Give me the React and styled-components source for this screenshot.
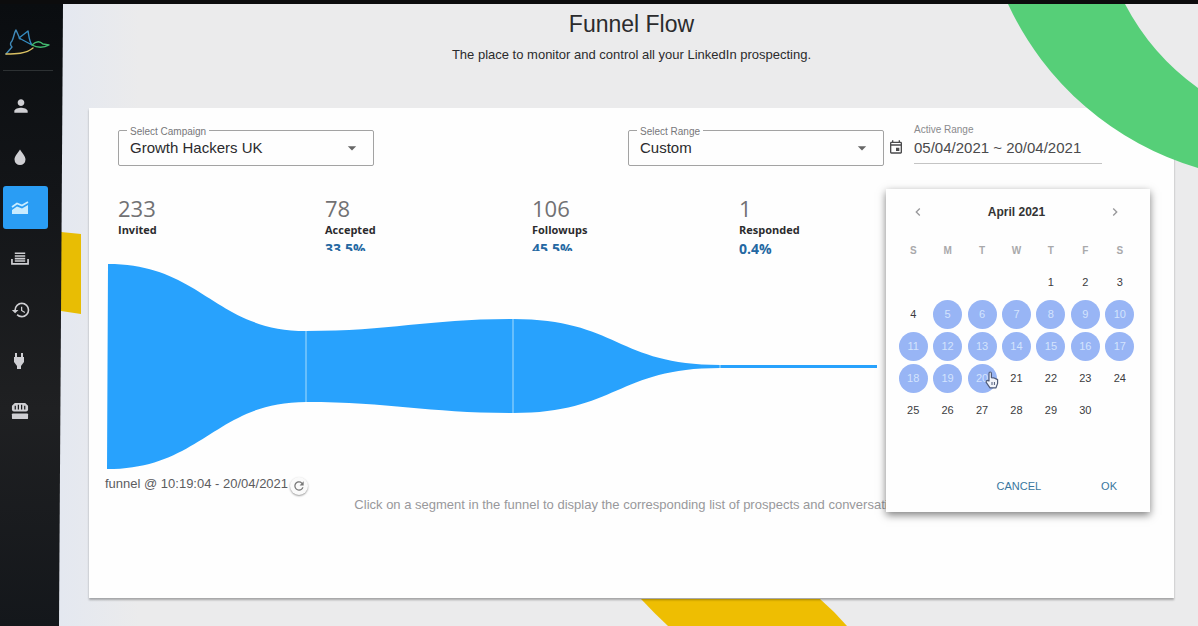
import React, { useState } from 'react';

import styled, { createGlobalStyle } from 'styled-components';
import {
  MdPerson,
  MdHistory,
  MdArrowDropDown,
  MdChevronLeft,
  MdChevronRight,
  MdRefresh,
  MdOutlineEvent,
} from 'react-icons/md';

const GlobalStyle = createGlobalStyle`
  * {
    box-sizing: border-box;
  }
  body {
    margin: 0;
    background: #ebebec;
    font-family: "Liberation Sans", Arial, sans-serif;
    color: #2b2b2d;
  }
  button, input, select {
    font-family: inherit;
    color: inherit;
  }
`

const Shell = styled.div`
  position: relative;
  display: flex;
  min-height: 100vh;
  overflow: hidden;
  border-top: 4px solid #0c0c0d;
  background: linear-gradient(90deg, #e4e8f0 60px, #ebebec 140px);
`

/* ---- sidebar ---- */

const Sidebar = styled.aside`
  position: relative;
  flex: none;
  width: 63px;
  padding: 24px 0 0 3px;
  background: linear-gradient(#0a0d10, #131518 30%, #1f2022 65%, #14171b);
  clip-path: polygon(0 0, 100% 0, calc(100% - 4px) 100%, 0 100%);
`

const LogoLink = styled.a`
  display: block;
  height: 43px;
  margin-right: 10px;
  border-bottom: 1px solid #2d3133;
`

const Nav = styled.nav`
  display: flex;
  flex-direction: column;
  gap: 8px;
  margin-top: 13px;
`

const NavButton = styled.button`
  display: flex;
  align-items: center;
  width: 45px;
  height: 43px;
  padding: 0 0 0 8px;
  border: 0;
  border-radius: 3px;
  background: ${(p) => (p.$active ? '#2a9df4' : 'transparent')};
  color: ${(p) => (p.$active ? '#c9ecff' : '#cfcfd3')};
`

/* ---- background shapes ---- */

const GreenRing = styled.svg`
  position: absolute;
  top: 0;
  right: 0;
  z-index: 2;
`

const YellowLeft = styled.svg`
  position: absolute;
  top: 228px;
  left: 61px;
`

const YellowBottom = styled.svg`
  position: absolute;
  bottom: 0;
  left: 641px;
`

/* ---- page ---- */

const Main = styled.main`
  flex: 1;
  min-width: 0;
  padding: 6px 24px 28px 26px;
`

const PageHeader = styled.header`
  padding-bottom: 43px;
  text-align: center;
`

const Title = styled.h1`
  margin: 0 0 7px;
  font-size: 23px;
  font-weight: 400;
  line-height: 28px;
`

const Subtitle = styled.p`
  margin: 0;
  font-size: 13px;
  line-height: 20px;
`

const Card = styled.section`
  position: relative;
  padding: 22px 72px 85px 29px;
  background: #fefefe;
  box-shadow: 0 2px 2px rgba(0, 0, 0, 0.3);
`

const Toolbar = styled.div`
  display: flex;
  justify-content: space-between;
`

const ToolbarGroup = styled.div`
  display: flex;
`

const SelectBox = styled.div`
  position: relative;
  width: 256px;
  height: 36px;
  & > label {
    position: absolute;
    top: -4px;
    left: 9px;
    padding: 0 3px;
    background: #fefefe;
    color: #77777a;
    font-size: 10px;
    line-height: 12px;
  }
  & > select {
    width: 100%;
    height: 100%;
    padding: 0 30px 2px 11px;
    appearance: none;
    border: 1px solid #a3a3a3;
    border-radius: 2px;
    background: transparent;
    font-size: 15px;
  }
  & > svg {
    position: absolute;
    top: 8px;
    right: 12px;
    color: #666;
    pointer-events: none;
  }
`

const DateField = styled.div`
  position: relative;
  display: flex;
  gap: 10px;
  padding-left: 4px;
  color: #4a4a4c;
  & > svg {
    flex: none;
    margin-top: 9px;
  }
`

const DateInput = styled.div`
  display: flex;
  flex-direction: column;
  width: 188px;
  height: 34px;
  & > label {
    margin-top: -6px;
    color: #8a8a8d;
    font-size: 10px;
    line-height: 12px;
  }
  & > input {
    flex: 1;
    width: 100%;
    padding: 0 0 4px;
    border: 0;
    border-bottom: 1px solid #c4c4c4;
    background: transparent;
    font-size: 15px;
  }
`

const Stats = styled.div`
  display: grid;
  grid-template-columns: repeat(4, 1fr);
  margin: 29px 156px 0 0;
  font-family: "Open Sans", "Noto Sans", sans-serif;
`

const StatValue = styled.div`
  color: #717173;
  font-size: 22px;
  line-height: 26px;
`

const StatLabel = styled.div`
  font-size: 11px;
  font-weight: 700;
  line-height: 18px;
`

const StatRate = styled.div`
  height: ${(p) => (p.$cut ? '12px' : '20px')};
  overflow: hidden;
  color: #2468a2;
  font-size: 14px;
  font-weight: 700;
  line-height: 20px;
`

const Chart = styled.svg`
  display: block;
  width: calc(100% - 214px);
  height: 205px;
  margin: 5px 0 0 -11px;
`

const StampRow = styled.div`
  display: flex;
  align-items: center;
  gap: 2px;
  height: 20px;
  margin: 4px 0 0 -13px;
  color: #5c5c5e;
  font-size: 13px;
`

const RefreshButton = styled.button`
  display: flex;
  align-items: center;
  justify-content: center;
  width: 18px;
  height: 18px;
  margin-top: 6px;
  padding: 0;
  border: 0;
  border-radius: 50%;
  background: #fafafa;
  box-shadow: 0 1px 2px rgba(0, 0, 0, 0.4);
  color: #777;
`

const Hint = styled.p`
  margin: 4px -72px 0 -29px;
  color: #98989b;
  font-size: 13px;
  line-height: 16px;
  text-align: center;
`

/* ---- calendar ---- */

const Popover = styled.div`
  position: absolute;
  top: 59px;
  left: 2px;
  z-index: 1;
  display: flex;
  flex-direction: column;
  width: 264px;
  height: 323px;
  padding: 10px 13px 15px 10px;
  background: #fefefe;
  box-shadow: 0 3px 8px rgba(0, 0, 0, 0.5);
`

const MonthBar = styled.div`
  display: flex;
  align-items: center;
  justify-content: space-between;
  height: 26px;
  padding: 0 14px;
  color: #333;
  font-size: 12px;
  font-weight: 700;
`

const ArrowButton = styled.button`
  display: flex;
  padding: 0;
  border: 0;
  background: none;
  color: #98989b;
`

const Days = styled.table`
  width: 100%;
  margin-top: 9px;
  border-collapse: collapse;
  table-layout: fixed;
  th, td {
    height: 32px;
    padding: 0;
    text-align: center;
  }
  th {
    color: #a9a9ab;
    font-size: 10px;
  }
`

const DayButton = styled.button`
  position: relative;
  width: 29px;
  height: 29px;
  padding: 0;
  border: 0;
  border-radius: 50%;
  background: ${(p) => (p.$selected ? '#98b5f5' : 'transparent')};
  color: ${(p) => (p.$selected ? '#d3e3fd' : '#3c3c3e')};
  font-size: 11px;
`

const Pointer = styled.svg`
  position: absolute;
  top: 7px;
  left: 17px;
`

const Actions = styled.div`
  display: flex;
  justify-content: flex-end;
  gap: 60px;
  margin-top: auto;
  padding-right: 20px;
`

const TextButton = styled.button`
  padding: 0;
  border: 0;
  background: none;
  color: #39769f;
  font-size: 11px;
  line-height: 22px;
`

function BirdLogo() {
  return (
    <svg width="48" height="30" viewBox="0 0 48 30" fill="none" strokeWidth="1.4" strokeLinejoin="round" strokeLinecap="round">
      <path d="M3 26 9 19C7 17 7 15 9 13 11 9 11 5 13 2L17 11" stroke="#3f89b8" />
      <path d="M16 10 25 3C26 8 26 13 29 17L16 10Z" stroke="#348bc0" />
      <path d="M29 17C33 13 37 13 40 16L46 17C41 20 34 20 29 17Z" stroke="#42b96e" />
      <path d="M3 26C12 26 23 26 30 20" stroke="#d9bf62" />
    </svg>
  )
}

function DropIcon() {
  return (
    <svg width="18" height="18" viewBox="0 0 18 18" fill="currentColor">
      <path d="M9 1.5C11 5 14.5 8 14.5 11.5A5.5 5.5 0 0 1 3.5 11.5C3.5 8 7 5 9 1.5Z" />
    </svg>
  )
}

function TrendIcon() {
  return (
    <svg width="18" height="18" viewBox="0 0 18 18" fill="none">
      <path d="M1 8 6 4.5 11 6.5 17 3" stroke="currentColor" strokeWidth="1.8" />
      <path d="M1 11 6 7.5 11 9.5 17 6V15H1Z" fill="currentColor" />
    </svg>
  )
}

function TrayIcon() {
  return (
    <svg width="18" height="18" viewBox="0 0 19 18" fill="none" stroke="currentColor">
      <path d="M1 9V14.2H18V9" strokeWidth="1.8" />
      <path d="M4 3H15M4 5.8H15M4 8.6H15M4 11.2H15" strokeWidth="1.6" />
    </svg>
  )
}

function PlugIcon() {
  return (
    <svg width="18" height="18" viewBox="0 0 18 18" fill="currentColor">
      <path d="M4 1H6V5H10V1H12V5H13V10L10 14V17H6V14L3 10V5H4Z" />
    </svg>
  )
}

function StoreIcon() {
  return (
    <svg width="18" height="19" viewBox="0 0 19 20" fill="currentColor">
      <path d="M4 1H15L18 4V8Q18 10 16 10H3Q1 10 1 8V4Z" />
      <path d="M4.5 4V8M7.8 3V8M11.2 3V8M14.5 4V8" stroke="#1c1d1f" strokeWidth="1.3" />
      <rect x="1" y="12" width="17" height="6" rx="1" />
    </svg>
  )
}

function HandPointer() {
  return (
    <Pointer width="14" height="18" viewBox="0 0 14 18" aria-hidden="true">
      <path
        d="M4 10V2.4Q4 1 5.2 1T6.4 2.4V6.6L8.4 6.8 10.6 7.6 12.6 8.6V12.4L11 16.8H5L1.2 11.4Q1 9.4 2.6 9.4Z"
        fill="#f2f4fa"
        stroke="#4f5b78"
        strokeWidth="1.2"
        strokeLinejoin="round"
      />
      <path d="M7 11V14M9.4 11V14" stroke="#4f5b78" />
    </Pointer>
  )
}

const navItems = [
  { name: 'Profile', icon: <MdPerson size={20} /> },
  { name: 'Leads', icon: <DropIcon /> },
  { name: 'Funnel', icon: <TrendIcon />, active: true },
  { name: 'Inbox', icon: <TrayIcon /> },
  { name: 'History', icon: <MdHistory size={20} /> },
  { name: 'Integrations', icon: <PlugIcon /> },
  { name: 'Store', icon: <StoreIcon /> },
];

const stats = [
  { value: 233, label: 'Invited' },
  { value: 78, label: 'Accepted', rate: '33.5%', cut: true },
  { value: 106, label: 'Followups', rate: '45.5%', cut: true },
  { value: 1, label: 'Responded', rate: '0.4%' },
];

const weekdays = ['S', 'M', 'T', 'W', 'T', 'F', 'S'];

// April 2021 starts on a Thursday
const weeks = [0, 1, 2, 3, 4].map((w) =>
  weekdays.map((_, d) => {
    const day = w * 7 + d - 3;
    return day > 0 && day <= 30 ? day : null;
  })
);

function OutlinedSelect({ id, label, options }) {
  return (
    <SelectBox>
      <select id={id}>
        {options.map((o) => <option key={o}>{o}</option>)}
      </select>
      <label htmlFor={id}>{label}</label>
      <MdArrowDropDown size={20} />
    </SelectBox>
  )
}

function Calendar() {
  const [range, setRange] = useState([5, 20]);

  const pick = (day) => {
    setRange(range[0] === range[1] && day > range[0] ? [range[0], day] : [day, day]);
  };

  return (
    <Popover>
      <MonthBar>
        <ArrowButton aria-label="Previous month"><MdChevronLeft size={16} /></ArrowButton>
        <span>April 2021</span>
        <ArrowButton aria-label="Next month"><MdChevronRight size={16} /></ArrowButton>
      </MonthBar>
      <Days>
        <thead>
          <tr>{weekdays.map((d, i) => <th key={i}>{d}</th>)}</tr>
        </thead>
        <tbody>
          {weeks.map((week, i) => (
            <tr key={i}>
              {week.map((day, j) => (
                <td key={j}>
                  {day && (
                    <DayButton $selected={day >= range[0] && day <= range[1]} onClick={() => pick(day)}>
                      {day}
                      {day === 20 && <HandPointer />}
                    </DayButton>
                  )}
                </td>
              ))}
            </tr>
          ))}
        </tbody>
      </Days>
      <Actions>
        <TextButton>CANCEL</TextButton>
        <TextButton>OK</TextButton>
      </Actions>
    </Popover>
  )
}

function FunnelChart() {
  return (
    <Chart viewBox="0 0 770 205" preserveAspectRatio="none" role="img" aria-label="Prospect funnel">
      <path
        fill="#28a2fd"
        d="M1 0C95 0 108 67 199 67 285 67 320 55 406 55 510 55 510 101 613 101H770V104H613C510 104 510 149 406 149 320 149 285 138 199 138 108 138 95 205 0 205Z"
      />
      <path d="M199 67V138M406 55V149M613 101V104" stroke="#7cc9fb" strokeWidth="1.5" />
    </Chart>
  )
}

export default function App() {
  return (
    <Shell>
      <GlobalStyle />
      <YellowLeft width="20" height="82">
        <path d="M0 0 20 2V82L0 79Z" fill="#e8bd04" />
      </YellowLeft>
      <YellowBottom width="206" height="27">
        <path d="M0 0H179Q193 12 206 27H27Q13 14 0 0Z" fill="#eebe02" />
      </YellowBottom>
      <Sidebar>
        <LogoLink href="/" aria-label="Home"><BirdLogo /></LogoLink>
        <Nav>
          {navItems.map((item) => (
            <NavButton key={item.name} aria-label={item.name} $active={item.active}>
              {item.icon}
            </NavButton>
          ))}
        </Nav>
      </Sidebar>
      <Main>
        <PageHeader>
          <Title>Funnel Flow</Title>
          <Subtitle>The place to monitor and control all your LinkedIn prospecting.</Subtitle>
        </PageHeader>
        <Card>
          <Toolbar>
            <OutlinedSelect id="campaign" label="Select Campaign" options={['Growth Hackers UK']} />
            <ToolbarGroup>
              <OutlinedSelect id="range" label="Select Range" options={['Custom']} />
              <DateField>
                <MdOutlineEvent size={16} />
                <DateInput>
                  <label htmlFor="dates">Active Range</label>
                  <input id="dates" defaultValue="05/04/2021 ~ 20/04/2021" />
                </DateInput>
                <Calendar />
              </DateField>
            </ToolbarGroup>
          </Toolbar>
          <Stats>
            {stats.map((s) => (
              <div key={s.label}>
                <StatValue>{s.value}</StatValue>
                <StatLabel>{s.label}</StatLabel>
                <StatRate $cut={s.cut}>{s.rate}</StatRate>
              </div>
            ))}
          </Stats>
          <FunnelChart />
          <StampRow>
            <span>funnel @ 10:19:04 - 20/04/2021</span>
            <RefreshButton aria-label="Refresh funnel"><MdRefresh size={14} /></RefreshButton>
          </StampRow>
          <Hint>Click on a segment in the funnel to display the corresponding list of prospects and conversations</Hint>
        </Card>
      </Main>
      <GreenRing width="190" height="165">
        <path d="M0 0A304 304 0 0 0 190 164V84A240 240 0 0 1 117 0Z" fill="#56cf78" />
      </GreenRing>
    </Shell>
  )
}
